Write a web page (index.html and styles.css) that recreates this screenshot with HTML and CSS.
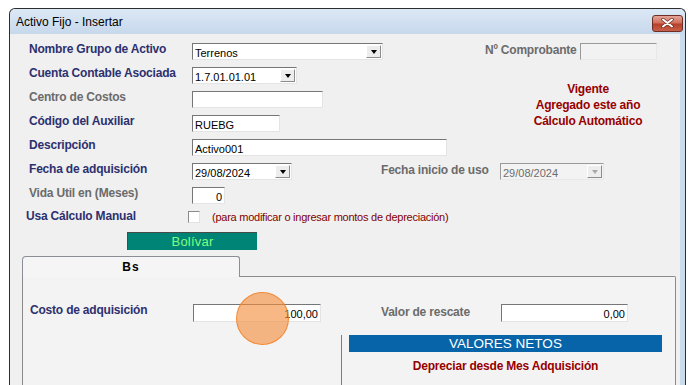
FILE: index.html
```html
<!DOCTYPE html>
<html lang="es">
<head>
  <meta charset="UTF-8" />
  <title>Activo Fijo - Insertar</title>
  <link rel="stylesheet" href="styles.css">
</head>
<body>
  <div class="window">
    <div class="titlebar">
      <span class="title">Activo Fijo - Insertar</span>
      <span class="close">
        <svg width="13" height="10" viewBox="0 0 13 10">
          <path d="M2 1.5 L11 8.5 M11 1.5 L2 8.5" stroke="#6b2a20" stroke-width="3.4" stroke-linecap="round"/>
          <path d="M2 1.5 L11 8.5 M11 1.5 L2 8.5" stroke="#ffffff" stroke-width="2" stroke-linecap="round"/>
        </svg>
      </span>
    </div>

    <div class="client">
      <div class="form">
        <div class="lbl navy">Nombre Grupo de Activo</div>
        <div class="combo w-grupo"><span class="val">Terrenos</span><span class="drop"></span></div>
        <div class="comprobante">
          <span class="lbl gray">Nº Comprobante</span>
          <span class="box disabled w-comp"></span>
        </div>

        <div class="lbl navy">Cuenta Contable Asociada</div>
        <div class="combo w-cuenta"><span class="val">1.7.01.01.01</span><span class="drop"></span></div>
        <div class="status">
          <div>Vigente</div>
          <div>Agregado este año</div>
          <div>Cálculo Automático</div>
        </div>

        <div class="lbl gray">Centro de Costos</div>
        <div class="box w-centro"></div>

        <div class="lbl navy">Código del Auxiliar</div>
        <div class="box w-aux">RUEBG</div>

        <div class="lbl navy">Descripción</div>
        <div class="box w-desc">Activo001</div>

        <div class="lbl navy">Fecha de adquisición</div>
        <div class="wide fechas">
          <div class="combo w-fecha"><span class="val">29/08/2024</span><span class="drop"></span></div>
          <span class="lbl gray inicio">Fecha inicio de uso</span>
          <div class="combo disabled w-inicio"><span class="val">29/08/2024</span><span class="drop"></span></div>
        </div>

        <div class="lbl gray">Vida Util en (Meses)</div>
        <div class="box w-vida num">0</div>

        <div class="lbl navy manual">Usa Cálculo Manual</div>
        <div class="wide manual-row">
          <span class="check"></span>
          <span class="note">(para modificar o ingresar montos de depreciación)</span>
        </div>
      </div>

      <div class="moneda">Bolívar</div>

      <div class="tabs">
        <div class="tab">Bs</div>
        <div class="panel">
          <div class="cost-row">
            <span class="lbl navy costo">Costo de adquisición</span>
            <span class="box w-costo num">100,00</span>
            <span class="lbl gray rescate">Valor de rescate</span>
            <span class="box w-rescate num">0,00</span>
          </div>
          <div class="netos">
            <div class="netos-bar">VALORES NETOS</div>
            <div class="depreciar">Depreciar desde Mes Adquisición</div>
            <div class="box w-netos"></div>
          </div>
        </div>
      </div>
    </div>
  </div>

  <div class="touch"></div>
</body>
</html>
```

FILE: styles.css
```css
* {
  margin: 0;
  padding: 0;
  box-sizing: border-box;
}

body {
  background: #ffffff;
  width: 688px;
  height: 385px;
  overflow: hidden;
  font-family: "Liberation Sans", Arial, sans-serif;
}

.window {
  margin: 8px 0 0 9px;
  width: 677px;
  height: 377px;
  border: 1px solid #2e2e2e;
  border-bottom: none;
  border-radius: 6px 6px 0 0;
  background: #cbdbee;
  display: flex;
  flex-direction: column;
  overflow: hidden;
}

.titlebar {
  height: 25px;
  flex-shrink: 0;
  display: flex;
  align-items: center;
  justify-content: space-between;
  padding: 0 2px 0 6px;
  border-radius: 5px 5px 0 0;
  background: linear-gradient(#dce8f5, #c7d8ec);
}

.title {
  font-size: 12px;
  color: #000;
  padding-top: 1px;
}

.close {
  width: 31px;
  height: 17px;
  margin-top: 3px;
  border: 1px solid #6e3024;
  border-radius: 3px;
  background: linear-gradient(#e4a597, #d0705c 45%, #b8402a 55%, #c8604a);
  display: flex;
  align-items: center;
  justify-content: center;
}

.client {
  flex: 1;
  margin-right: 5px;
  background: #f0f0f0;
  padding-top: 9px;
  overflow: hidden;
}

/* top form */

.form {
  display: grid;
  grid-template-columns: 163px 288px 1fr;
  grid-template-rows: repeat(7, 24px) 21px;
  padding-left: 19px;
}

.form > .lbl {
  grid-column: 1;
}

.lbl {
  font-size: 12px;
  font-weight: bold;
  letter-spacing: -0.2px;
  line-height: 14px;
  margin-top: -1px;
  white-space: nowrap;
}

.navy { color: #2d306f; }
.gray { color: #6b6b6b; }

.manual { margin: -2px 0 0 -3px; }

.box {
  display: block;
  height: 17px;
  background: #ffffff;
  border: 1px solid;
  border-color: #767676 #e4e4e4 #e4e4e4 #767676;
  font-size: 11px;
  line-height: 12px;
  padding: 3px 2px 0 2px;
  color: #000;
  white-space: nowrap;
}

.box.disabled {
  background: #f2f2f2;
  border-color: #9a9a9a #e8e8e8 #e8e8e8 #9a9a9a;
}

.num { text-align: right; }

.combo {
  display: flex;
  align-items: center;
  height: 17px;
  background: #ffffff;
  border: 1px solid;
  border-color: #767676 #e4e4e4 #e4e4e4 #767676;
  padding: 1px;
  font-size: 11px;
}

.combo .val {
  flex: 1;
  line-height: 12px;
  padding: 2px 0 0 1px;
  color: #000;
}

.drop {
  width: 15px;
  height: 13px;
  background: #ededed;
  border: 1px solid;
  border-color: #ffffff #8c8c8c #8c8c8c #ffffff;
  display: flex;
  align-items: center;
  justify-content: center;
}

.drop::after {
  content: "";
  border-left: 3.5px solid transparent;
  border-right: 3.5px solid transparent;
  border-top: 4px solid #000;
}

.combo.disabled {
  background: #f3f3f3;
  border-color: #9a9a9a #e8e8e8 #e8e8e8 #9a9a9a;
}

.combo.disabled .val { color: #6d6d6d; }
.combo.disabled .drop::after { border-top-color: #a8a8a8; }

.w-grupo { width: 191px; }
.w-cuenta { width: 105px; }
.w-centro { width: 131px; }
.w-aux { width: 88px; }
.w-desc { width: 255px; }
.w-fecha { width: 100px; }
.w-inicio { width: 104px; }
.w-vida { width: 33px; }
.w-comp { width: 77px; }

.comprobante {
  display: flex;
  align-items: flex-start;
}

.comprobante .lbl {
  width: 95px;
  margin: 0 0 0 5px;
}

.status {
  grid-row: span 3;
  padding: 14px 0 0 16px;
  text-align: center;
  color: #960000;
  font-size: 12px;
  font-weight: bold;
  letter-spacing: -0.2px;
  line-height: 16px;
}

.wide {
  grid-column: 2 / 4;
  display: flex;
  align-items: flex-start;
}

.inicio {
  width: 119px;
  margin: 0 0 0 89px;
}

.check {
  width: 12px;
  height: 12px;
  margin: 0 12px 0 -4px;
  background: #ffffff;
  border: 1px solid;
  border-color: #8a8a8a #e2e2e2 #e2e2e2 #8a8a8a;
}

.note {
  font-size: 11px;
  letter-spacing: -0.25px;
  line-height: 12px;
  color: #800000;
}

/* currency strip */

.moneda {
  margin-left: 117px;
  width: 130px;
  height: 18px;
  background: #008476;
  border-top: 1px solid #4a4a4a;
  border-left: 1px solid #4a4a4a;
  color: #80ff80;
  font-size: 13px;
  letter-spacing: 0.2px;
  line-height: 17px;
  text-align: center;
}

/* tab control */

.tabs {
  margin: 6px 0 0 12px;
  width: 654px;
}

.tab {
  position: relative;
  z-index: 1;
  width: 218px;
  height: 21px;
  margin-bottom: -1px;
  border: 1px solid #8b8e96;
  border-bottom: none;
  border-radius: 4px 3px 0 0;
  background: #f5f5f5;
  text-align: center;
  font-size: 12px;
  font-weight: bold;
  letter-spacing: 1px;
  line-height: 18px;
  padding-top: 1px;
  color: #000;
}

.panel {
  height: 120px;
  border: 1px solid #8a8a8a;
  border-bottom: none;
  border-top-right-radius: 2px;
  background: #f3f3f3;
  padding: 27px 0 0 7px;
}

.cost-row {
  display: flex;
  align-items: flex-start;
  height: 18px;
}

.costo { width: 163px; }
.w-costo { width: 128px; height: 18px; }
.rescate { width: 120px; margin: 1px 0 0 60px; }
.w-rescate { width: 127px; height: 18px; }

.netos {
  margin: 13px 0 0 311px;
  width: 327px;
  height: 60px;
  border-left: 1px solid #7c7c7c;
}

.netos-bar {
  margin-left: 7px;
  width: 313px;
  height: 17px;
  background: #0864a8;
  color: #ffffff;
  font-size: 13.5px;
  line-height: 17px;
  text-align: center;
}

.depreciar {
  margin: 7px 0 0 7px;
  width: 313px;
  text-align: center;
  color: #960000;
  font-size: 12px;
  font-weight: bold;
  letter-spacing: -0.2px;
  line-height: 14px;
}

.w-netos {
  margin: 12px 0 0 175px;
  width: 143px;
  border-top-color: #6a6a6a;
}

/* touch indicator from the screen capture */

.touch {
  position: absolute;
  left: 236px;
  top: 292px;
  width: 53px;
  height: 53px;
  border-radius: 50%;
  background: rgba(244, 140, 60, 0.62);
  border: 1.5px solid rgba(238, 130, 40, 0.85);
}
```
